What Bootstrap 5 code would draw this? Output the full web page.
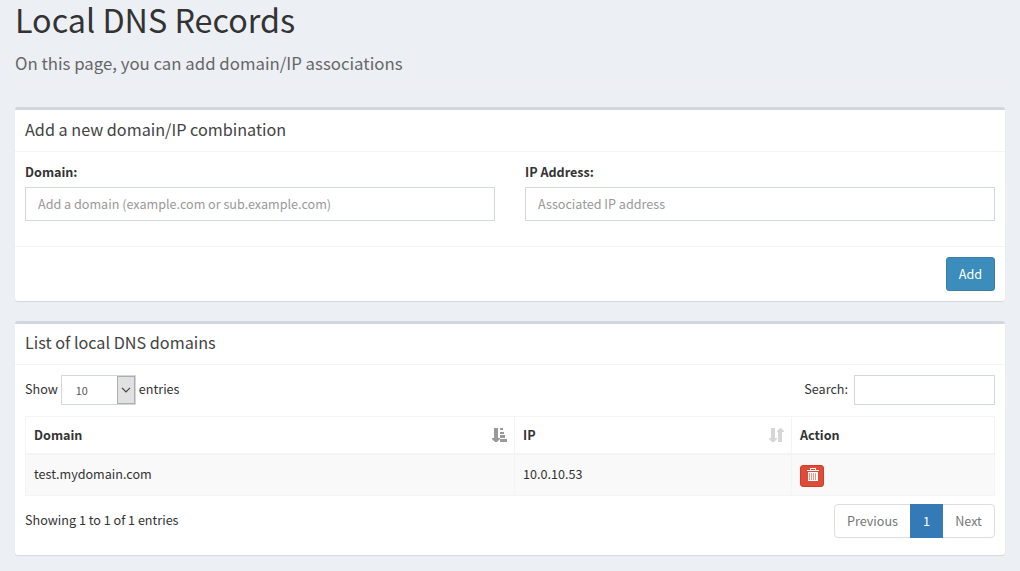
<!DOCTYPE html>
<html lang="en">
<head>
<meta charset="utf-8">
<meta name="viewport" content="width=device-width, initial-scale=1">
<title>Local DNS Records</title>
<link href="https://cdn.jsdelivr.net/npm/bootstrap@5.3.0/dist/css/bootstrap.min.css" rel="stylesheet">
<style>
  body { background: #ecf0f5; color: #333; font-family: "Noto Sans CJK SC", "Open Sans", sans-serif; font-size: 12.6px; line-height: 20px; overflow: hidden; }
  .content { padding: 0 15px; }
  .page-head { height: 88px; border-bottom: 1px solid #eee; margin-bottom: 19px; }
  .page-head h1 { font-size: 32.3px; line-height: 38px; font-weight: 400; margin: 0; }
  .page-head small { display: block; font-size: 16.8px; line-height: 24px; color: #666; padding-top: 13px; }
  .panel-box { background: #fff; border: 0; border-top: 3px solid #d2d6de; border-radius: 3px; box-shadow: 0 1px 1px rgba(0,0,0,.1); margin-bottom: 20px; color: #333; }
  .panel-box .card-header { background: none; border-bottom: 1px solid #f4f4f4; padding: 9px 10px; height: 42px; }
  .panel-box h3 { font-size: 16.2px; line-height: 20px; font-weight: 400; color: #444; margin: 0; }
  .panel-box .card-body { padding: 10px; }
  .panel-box .card-footer { background: none; border-top: 1px solid #f4f4f4; padding: 10px; }
  .list-box .card-header { padding-top: 8px; height: 41px; }
  .list-box .card-body { padding-bottom: 17px; }
  .form-label { font-weight: 700; margin-bottom: 5px; display: block; }
  .form-control { border: 1px solid #d2d6de; border-radius: 0; height: 34px; padding: 5px 12px 7px; font-size: 12.6px; line-height: 20px; }
  .form-control::placeholder { color: #999; }
  .search-field { width: 141px; height: 30px; }
  .controls { height: 30px; margin-bottom: 11px; }
  .controls .word { padding-bottom: 2px; }
  .length-select { width: 75px; height: 30px; border: 1px solid #d2d6de; font-size: 10.8px; color: #555; margin: 0 3px; }
  .length-select .value { padding: 0 0 0 14px; line-height: 28px; }
  .length-select .arrow { width: 18px; border: 1px solid #adadad; background: #e1e1e1; }
  .btn { font-size: 12.6px; line-height: 20px; border-radius: 3px; }
  .btn-add { background: #3c8dbc; border-color: #367fa9; color: #fff; padding: 6px 0; width: 49px; }
  .btn-remove { background: #dd4b39; border-color: #d73925; width: 24px; height: 22px; padding: 0 0 3px 2px; margin-top: 1px; }
  .records { table-layout: fixed; width: 970px; margin: 0 0 8px; border-collapse: separate; border-spacing: 0; border: 1px solid #f4f4f4; color: #333; }
  .records th, .records td { padding: 8px; border: 0; box-shadow: none; background: none; }
  .records th + th, .records td + td { border-left: 1px solid #f4f4f4; }
  .records th { height: 38px; border-bottom: 2px solid #f4f4f4; padding: 7px 7px 8px 8px; line-height: 20px; }
  .records td { height: 40px; padding: 9px 8px 0; background: #f9f9f9; color: #333; }
  .pagination { --bs-pagination-border-radius: 4px; }
  .pagination .page-link { font-size: 12.6px; line-height: 20px; padding: 6px 0; color: #777; border-color: #ddd; text-align: center; }
  .pagination .active .page-link { background: #337ab7; border-color: #337ab7; color: #fff; }
  .info-line { padding-top: 6px; }
</style>
</head>
<body>
<main class="content">
  <header class="page-head">
    <h1>Local DNS Records</h1>
    <small>On this page, you can add domain/IP associations</small>
  </header>

  <section class="card panel-box">
    <div class="card-header"><h3>Add a new domain/IP combination</h3></div>
    <div class="card-body" style="height:94px">
      <div class="row" style="--bs-gutter-x:30px">
        <div class="col-6">
          <label class="form-label" for="domain">Domain:</label>
          <input id="domain" class="form-control" placeholder="Add a domain (example.com or sub.example.com)">
        </div>
        <div class="col-6">
          <label class="form-label" for="ip">IP Address:</label>
          <input id="ip" class="form-control" placeholder="Associated IP address">
        </div>
      </div>
    </div>
    <div class="card-footer d-flex justify-content-end">
      <button class="btn btn-add" type="button">Add</button>
    </div>
  </section>

  <section class="card panel-box list-box">
    <div class="card-header"><h3>List of local DNS domains</h3></div>
    <div class="card-body">
      <div class="controls d-flex justify-content-between align-items-center">
        <div class="d-flex align-items-center"><span class="word">Show</span>
          <div class="length-select d-flex justify-content-between">
            <span class="value">10</span>
            <span class="arrow d-flex align-items-center justify-content-center"><svg width="10" height="6" viewBox="0 0 10 6" fill="none" stroke="#444" stroke-width="1.2"><path d="M1 .8l4 4 4-4"/></svg></span>
          </div>
          <span class="word">entries</span>
        </div>
        <label class="d-flex align-items-center"><span class="word">Search:</span><input class="form-control search-field" aria-label="Search" style="margin-left:6px"></label>
      </div>
      <table class="table records">
        <colgroup><col style="width:488px"><col style="width:277px"><col></colgroup>
        <thead>
          <tr>
            <th><div class="d-flex justify-content-between align-items-center">Domain
              <svg width="15" height="14" viewBox="0 0 15 14" fill="#999"><path d="M2 0h4v10h2v1l-3 3H3l-3-3v-1h2zM8 0h3v2H8zM8 4h4v2H8zM8 7h5v3H8zM8 11h7v3H8z"/></svg></div></th>
            <th><div class="d-flex justify-content-between align-items-center">IP
              <svg width="15" height="14" viewBox="0 0 15 14" fill="#d6d6d6"><path d="M2 0h4v10h2v1l-3 3H3l-3-3v-1h2zM9 14h4V4h2V3l-3-3h-1L8 3v1h1z"/></svg></div></th>
            <th>Action</th>
          </tr>
        </thead>
        <tbody>
          <tr>
            <td>test.mydomain.com</td>
            <td>10.0.10.53</td>
            <td><button class="btn btn-remove d-flex align-items-center justify-content-center" type="button" aria-label="Delete"><svg width="12" height="13" viewBox="0 0 12 13" fill="#fff"><path fill-rule="evenodd" d="M3 2V0h6v2h3v1H0V2zM4 2h4V1H4z"/><path d="M1 4h10v9H1z"/><path fill="#e9957f" d="M2 5h1v7H2zM4 5h1v7H4zM6 5h1v7H6zM8 5h1v7H8z"/></svg></button></td>
          </tr>
        </tbody>
      </table>
      <div class="d-flex justify-content-between">
        <div class="info-line">Showing 1 to 1 of 1 entries</div>
        <ul class="pagination mb-0">
          <li class="page-item"><a class="page-link" href="#" style="width:77px">Previous</a></li>
          <li class="page-item active"><a class="page-link" href="#" style="width:33px">1</a></li>
          <li class="page-item"><a class="page-link" href="#" style="width:53px">Next</a></li>
        </ul>
      </div>
    </div>
  </section>
</main>
<script src="https://cdn.jsdelivr.net/npm/bootstrap@5.3.0/dist/js/bootstrap.bundle.min.js"></script>
</body>
</html>
